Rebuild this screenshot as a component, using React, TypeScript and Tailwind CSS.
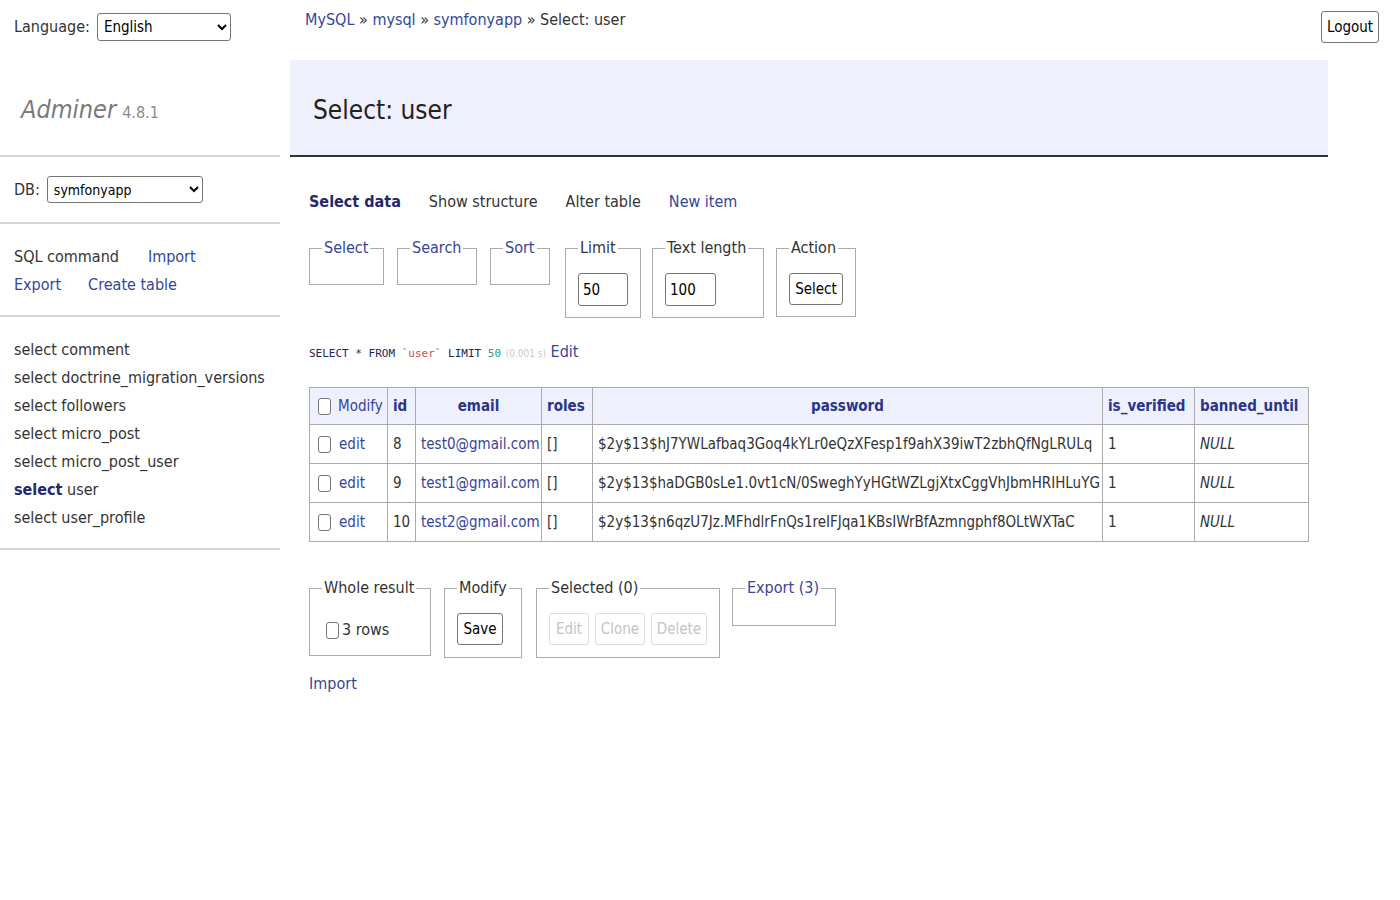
import React from "react";

const linkCls = "text-[#34469a]";
const navyBold = "font-bold text-[#1f2a6e]";

const Box = () => (
  <span className="inline-block w-[13px] h-[17px] border border-[#767676] rounded-[3px] bg-white shrink-0" />
);

const Hr = () => <div className="h-[2px] bg-[#d4d4d4]" />;

const tables = [
  "comment",
  "doctrine_migration_versions",
  "followers",
  "micro_post",
  "micro_post_user",
  "user",
  "user_profile",
];

const rows = [
  { id: "8", email: "test0@gmail.com", pass: "$2y$13$hJ7YWLafbaq3Goq4kYLr0eQzXFesp1f9ahX39iwT2zbhQfNgLRULq" },
  { id: "9", email: "test1@gmail.com", pass: "$2y$13$haDGB0sLe1.0vt1cN/0SweghYyHGtWZLgjXtxCggVhJbmHRIHLuYG" },
  { id: "10", email: "test2@gmail.com", pass: "$2y$13$n6qzU7Jz.MFhdlrFnQs1reIFJqa1KBsIWrBfAzmngphf8OLtWXTaC" },
];

function Sidebar() {
  return (
    <aside className="w-[280px] shrink-0">
      <div className="flex items-center h-[41px] pt-[13px] pl-[14px]">
        <span>Language:</span>
        <select className="ml-[7px] w-[134px] h-[28px] border border-[#767676] rounded-[3px] bg-white text-[15px] pl-[2px] text-black">
          <option>English</option>
        </select>
      </div>
      <div className="h-[114px] pt-[24px] pl-[21px] flex items-center">
        <span className="italic text-[25px] text-[#7a7a7a]">Adminer</span>
        <span className="ml-[6px] mt-[6px] text-[16px] text-[#8a8a8a]">4.8.1</span>
      </div>
      <Hr />
      <div className="h-[65px] flex items-center pl-[14px]">
        <span>DB:</span>
        <select className="ml-[7px] w-[156px] h-[27px] border border-[#767676] rounded-[3px] bg-white text-[14px] pl-[2px] text-black">
          <option>symfonyapp</option>
        </select>
      </div>
      <Hr />
      <div className="pt-[19px] pb-[16px] pl-[14px] leading-[28px]">
        <div className="flex gap-[29px]">
          <span>SQL command</span>
          <span className={linkCls}>Import</span>
        </div>
        <div className="flex gap-[27px]">
          <span className={linkCls}>Export</span>
          <span className={linkCls}>Create table</span>
        </div>
      </div>
      <Hr />
      <ul className="pt-[19px] pb-[16px] pl-[14px] leading-[28px]">
        {tables.map((t) => (
          <li key={t}>
            {t === "user" ? <span className={navyBold}>select</span> : "select"} {t}
          </li>
        ))}
      </ul>
      <Hr />
    </aside>
  );
}

function Field({
  title,
  link,
  className,
  children,
}: {
  title: string;
  link?: boolean;
  className?: string;
  children?: React.ReactNode;
}) {
  return (
    <fieldset className={`border border-[#ababab] px-[12px] shrink-0 ${className ?? ""}`}>
      <legend className={`px-[2px] leading-[24px] whitespace-nowrap ${link ? linkCls : ""}`}>{title}</legend>
      {children}
    </fieldset>
  );
}

const btn = "h-[32px] px-0 border border-[#767676] rounded-[3px] bg-white text-[15px] text-black";
const btnOff = "h-[32px] px-0 border border-[#dcdcdc] rounded-[3px] bg-white text-[15px] text-[#c4c4c4]";

function ResultTable() {
  const th = "border border-[#ababab] px-[5px] text-[15px] font-bold text-[#2a3585]";
  const td = "border border-[#ababab] px-[5px] text-[15px] whitespace-nowrap overflow-hidden";
  return (
    <table className="table-fixed border-collapse w-[999px] mt-[19px]">
      <colgroup>
        <col className="w-[78px]" />
        <col className="w-[28px]" />
        <col className="w-[126px]" />
        <col className="w-[51px]" />
        <col className="w-[510px]" />
        <col className="w-[92px]" />
        <col className="w-[114px]" />
      </colgroup>
      <thead>
        <tr className="h-[37px] bg-[#eef0fd]">
          <td className="border border-[#ababab] pl-[8px]">
            <div className="flex items-center gap-[7px]">
              <Box />
              <span className={`${linkCls} text-[15px]`}>Modify</span>
            </div>
          </td>
          <th className={`${th} text-left`}>id</th>
          <th className={th}>email</th>
          <th className={`${th} text-left`}>roles</th>
          <th className={th}>password</th>
          <th className={`${th} text-left`}>is_verified</th>
          <th className={`${th} text-left`}>banned_until</th>
        </tr>
      </thead>
      <tbody>
        {rows.map((r) => (
          <tr key={r.id} className="h-[39px]">
            <td className="border border-[#ababab] pl-[8px]">
              <div className="flex items-center gap-[8px]">
                <Box />
                <span className={`${linkCls} text-[15px]`}>edit</span>
              </div>
            </td>
            <td className={td}>{r.id}</td>
            <td className={`${td} ${linkCls}`}>{r.email}</td>
            <td className={td}>[]</td>
            <td className={td}>{r.pass}</td>
            <td className={td}>1</td>
            <td className={`${td} italic`}>NULL</td>
          </tr>
        ))}
      </tbody>
    </table>
  );
}

export default function App() {
  return (
    <div className="flex min-h-[900px] bg-white font-['DejaVu_Sans_Condensed','DejaVu_Sans',sans-serif] font-stretch-condensed text-[16px] text-[#333]">
      <Sidebar />
      <main className="flex-1 pl-[10px]">
        <div className="flex justify-between h-[60px] pl-[15px] pr-[21px]">
          <p className="mt-[6px] leading-[28px]">
            <span className={linkCls}>MySQL</span> » <span className={linkCls}>mysql</span> »{" "}
            <span className={linkCls}>symfonyapp</span> » Select: user
          </p>
          <button className={`mt-[11px] w-[58px] ${btn}`}>Logout</button>
        </div>
        <h2 className="w-[1038px] h-[97px] bg-[#eef0fd] border-b-2 border-[#333] flex items-center pl-[23px] pt-[5px] text-[26px] text-[#222]">
          Select: user
        </h2>

        <div className="pl-[19px]">
          <nav className="mt-[31px] flex gap-[28px] leading-[28px]">
            <span className={navyBold}>Select data</span>
            <span>Show structure</span>
            <span>Alter table</span>
            <span className={linkCls}>New item</span>
          </nav>

          <div className="mt-[20px] flex items-start">
            <Field title="Select" link className="w-[75px]">
              <div className="h-[24px]" />
            </Field>
            <Field title="Search" link className="w-[80px] ml-[13px]">
              <div className="h-[24px]" />
            </Field>
            <Field title="Sort" link className="w-[60px] ml-[13px]">
              <div className="h-[24px]" />
            </Field>
            <Field title="Limit" className="w-[74px] ml-[15px]">
              <div className="pt-[13px] pb-[11px]">
                <input
                  readOnly
                  value="50"
                  className="w-[50px] h-[33px] border border-[#767676] rounded-[3px] px-[4px] text-[15px] text-black"
                />
              </div>
            </Field>
            <Field title="Text length" className="w-[112px] ml-[11px]">
              <div className="pt-[13px] pb-[11px]">
                <input
                  readOnly
                  value="100"
                  className="w-[51px] h-[33px] border border-[#767676] rounded-[3px] px-[4px] text-[15px] text-black"
                />
              </div>
            </Field>
            <Field title="Action" className="w-[79px] ml-[12px]">
              <div className="pt-[13px] pb-[11px]">
                <button className={`w-[54px] ${btn}`}>Select</button>
              </div>
            </Field>
          </div>

          <p className="mt-[20px] leading-[28px]">
            <code className="font-['DejaVu_Sans_Mono',monospace] text-[11px] text-[#1d2550]">
              SELECT * FROM <span className="text-[#c0504d]">`user`</span> LIMIT{" "}
              <span className="text-[#2f9a8a]">50</span>
            </code>{" "}
            <span className="text-[10px] text-[#c8c8c8]">(0.001 s)</span>{" "}
            <span className={linkCls}>Edit</span>
          </p>

          <ResultTable />

          <div className="mt-[34px] flex items-start">
            <Field title="Whole result" className="w-[122px]">
              <div className="pt-[18px] pb-[13px] pl-[4px] flex items-center gap-[3px]">
                <Box />
                <span>3 rows</span>
              </div>
            </Field>
            <Field title="Modify" className="w-[78px] ml-[13px]">
              <div className="pt-[13px] pb-[12px]">
                <button className={`w-[46px] ${btn}`}>Save</button>
              </div>
            </Field>
            <Field title="Selected (0)" className="w-[182px] ml-[14px] px-[10px]">
              <div className="pt-[13px] pb-[12px] flex gap-[6px]">
                <button className={`w-[40px] ${btnOff}`}>Edit</button>
                <button className={`w-[50px] ${btnOff}`}>Clone</button>
                <button className={`w-[56px] ${btnOff}`}>Delete</button>
              </div>
            </Field>
            <Field title="Export (3)" link className="w-[104px] ml-[12px]">
              <div className="h-[25px]" />
            </Field>
          </div>

          <p className={`mt-[12px] leading-[28px] ${linkCls}`}>Import</p>
        </div>
      </main>
    </div>
  );
}
